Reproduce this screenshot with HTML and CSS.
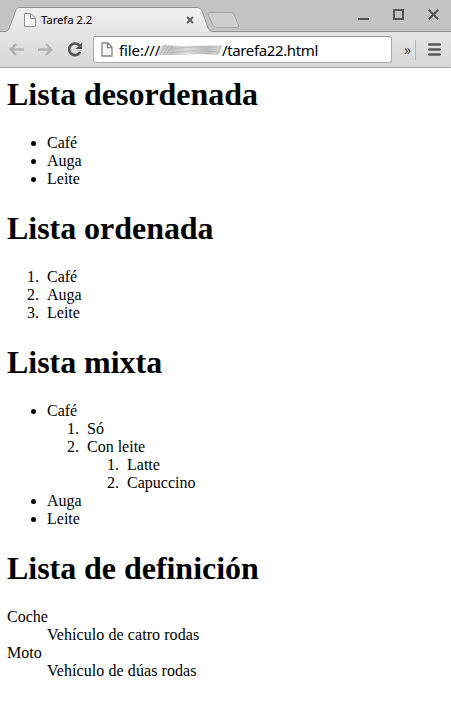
FILE: index.html
```html
<!DOCTYPE html>
<html lang="gl">
<head>
<meta charset="utf-8">
<title>Tarefa 2.2</title>
<link rel="stylesheet" href="styles.css">
</head>
<body>
<header class="browser">
  <div class="tabstrip">
    <svg class="tab-shapes" width="451" height="32" viewBox="0 0 451 32">
      <defs>
        <linearGradient id="tab" x1="0" y1="0" x2="0" y2="1"><stop offset="0" stop-color="#efefef"/><stop offset="1" stop-color="#e5e5e5"/></linearGradient>
      </defs>
      <path d="M0 31.5H5C8 31.5 8.5 30 9.5 27.5L15.500 11C16.500 8.500 17.500 7.500 20 7.500H197C200 7.500 201 9 202 11L208 27.500C209 30 210 31.500 213 31.500H451V33H0Z" fill="url(#tab)" stroke="#929292"/>
      <path d="M211 12.500H230C232.500 12.500 233.500 13.500 234.500 16L238.500 25C239 27 238.500 27.500 237 27.500H217C214.500 27.500 213.500 26.500 212.500 24L208 15C207.500 13.500 208.500 12.500 211 12.500Z" fill="#cecece" stroke="#a5a5a5"/>
    </svg>
    <div class="tab">
      <svg class="tab-page" width="12" height="14" viewBox="0 0 12 14"><path d="M.5.5H7L11.500 5V13.500H.5ZM6.500.5V5.500H11.500" fill="#f7f7f7" stroke="#8e8e8e"/></svg>
      <span class="tab-title">Tarefa 2.2</span>
      <svg class="tab-close" width="8" height="8" viewBox="0 0 8 8"><path d="M1 1L7 7M7 1L1 7" stroke="#5c5c5c" stroke-width="1.800"/></svg>
    </div>
    <div class="window-controls">
      <svg width="11" height="11" viewBox="0 0 11 11"><path d="M0 10H11" stroke="#555" stroke-width="2"/></svg>
      <svg width="11" height="11" viewBox="0 0 11 11"><path d="M1 1H10V10H1Z" fill="none" stroke="#555" stroke-width="2"/></svg>
      <svg width="11" height="11" viewBox="0 0 11 11"><path d="M.7.7L10.300 10.300M10.300.7L.7 10.300" stroke="#555" stroke-width="2"/></svg>
    </div>
  </div>
  <div class="toolbar">
    <svg class="arrow" width="15" height="13" viewBox="0 0 15 13"><path d="M7 1L1.800 6.500L7 12M2 6.500H15" fill="none" stroke="#b2b2b2" stroke-width="2.500"/></svg>
    <svg class="arrow forward" width="15" height="13" viewBox="0 0 15 13"><path d="M8 1L13.200 6.500L8 12M13 6.500H0" fill="none" stroke="#b2b2b2" stroke-width="2.500"/></svg>
    <svg class="reload" width="16" height="15" viewBox="0 0 16 15"><path d="M12.600 3.800A5.800 5.800 0 1 0 13.200 9.800" fill="none" stroke="#555" stroke-width="2.600"/><path d="M15 .5V7H8.500Z" fill="#555"/></svg>
    <div class="address">
      <svg class="page-icon" width="12" height="15" viewBox="0 0 12 15"><path d="M1 1H7L11 5V14H1ZM6.500 1V5.500H11" fill="#f7f7f7" stroke="#858585" stroke-width="1.300"/></svg>
      <span class="scheme">file:///</span>
      <svg class="smudge" width="68" height="18" viewBox="0 0 68 18">
        <defs><linearGradient id="smear"><stop offset="0" stop-color="#d8d8d8"/><stop offset=".2" stop-color="#bfc0c1"/><stop offset=".45" stop-color="#ddd"/><stop offset=".75" stop-color="#bbb"/><stop offset="1" stop-color="#ddd"/></linearGradient><filter id="soft"><feGaussianBlur stdDeviation=".6"/></filter></defs>
        <path d="M4 4L22 5L62 4.500L65 4L61 14L41 13L22 14L0 14Z" fill="url(#smear)" filter="url(#soft)"/>
        <path d="M2 14L8 3M5 14L11 4M8 14L14 5M59 13L63 4" stroke="#aaa" stroke-width=".7"/>
        <path d="M14 8Q34 5 60 6M12 12Q35 8 60 11" fill="none" stroke="#b2b2b2" stroke-width=".7"/>
      </svg>
      <span class="path">/tarefa22.html</span>
    </div>
    <span class="more">»</span>
    <span class="divider"></span>
    <svg class="menu" width="13" height="13" viewBox="0 0 13 13"><path d="M1.300 1.500H11.700M1.300 6.500H11.700M1.300 11.500H11.700" stroke="#565656" stroke-width="2.600" stroke-linecap="round"/></svg>
  </div>
</header>
<main>
  <h1>Lista desordenada</h1>
  <ul>
    <li>Café</li>
    <li>Auga</li>
    <li>Leite</li>
  </ul>
  <h1>Lista ordenada</h1>
  <ol>
    <li>Café</li>
    <li>Auga</li>
    <li>Leite</li>
  </ol>
  <h1>Lista mixta</h1>
  <ul>
    <li>Café
      <ol>
        <li>Só</li>
        <li>Con leite
          <ol>
            <li>Latte</li>
            <li>Capuccino</li>
          </ol>
        </li>
      </ol>
    </li>
    <li>Auga</li>
    <li>Leite</li>
  </ul>
  <h1>Lista de definición</h1>
  <dl>
    <dt>Coche</dt>
    <dd>Vehículo de catro rodas</dd>
    <dt>Moto</dt>
    <dd>Vehículo de dúas rodas</dd>
  </dl>
</main>
</body>
</html>
```
FILE: styles.css
```css
@counter-style spaced-decimal {
  system: extends decimal;
  suffix: ".\a0\a0";
}
body {
  margin: 0;
  background: #fff;
  color: #000;
  font: 16px/18px "Liberation Serif", serif;
}
.browser {
  height: 68px;
  box-sizing: border-box;
  border-bottom: 1px solid #a8a8a8;
  font-family: "Noto Sans", "Open Sans", sans-serif;
}
.browser svg { flex: none; display: block; }
.tabstrip {
  position: relative;
  display: flex;
  justify-content: space-between;
  height: 32px;
  background: #c3c3c3;
}
.tab-shapes { position: absolute; left: 0; top: 0; }
.tab {
  position: relative;
  display: flex;
  align-items: center;
  width: 171px;
  height: 25px;
  margin-top: 7px;
  padding-left: 24px;
}
.tab-title {
  flex: 1;
  margin-left: 5px;
  font-size: 11.5px;
  letter-spacing: -.15px;
  line-height: 16px;
  white-space: nowrap;
}
.tab-close { margin-right: 1px; }
.window-controls {
  position: relative;
  display: flex;
  gap: 24px;
  margin: 9px 12px 0 0;
}
.toolbar {
  display: flex;
  align-items: center;
  height: 35px;
  padding-left: 9px;
  background: linear-gradient(#e5e5e5, #d8d8d8);
}
.forward { margin-left: 14px; }
.reload { margin-left: 14px; }
.address {
  display: flex;
  align-items: center;
  box-sizing: border-box;
  width: 299px;
  height: 27px;
  margin-left: 10px;
  padding-left: 7px;
  border: 1px solid #ababab;
  border-top-color: #999;
  border-radius: 3px;
  background: #fff;
  font-size: 15px;
  line-height: 20px;
  white-space: nowrap;
}
.scheme { width: 40px; margin-left: 6px; letter-spacing: -.1px; }
.smudge { margin: 0 -4px 0 -1px; }
.path { letter-spacing: -.37px; }
.more {
  width: 8px;
  margin-left: 12px;
  color: #444;
  font-size: 14px;
  line-height: 18px;
}
.divider {
  width: 1px;
  height: 20px;
  margin-left: 3px;
  background: #b5b5b5;
}
.menu { margin-left: 12px; }
main { padding: 8px 7px 0; }
h1 {
  margin: 21.44px 0;
  font-size: 32px;
  line-height: 37px;
  letter-spacing: -.04px;
}
main > h1:first-child { margin-top: 0; }
ul, ol { margin: 16px 0; padding-left: 40px; }
ol { list-style: spaced-decimal; }
li ol { margin: 0; }
dl { margin: 16px 0; }
dd { margin-left: 40px; letter-spacing: .07px; }
```
